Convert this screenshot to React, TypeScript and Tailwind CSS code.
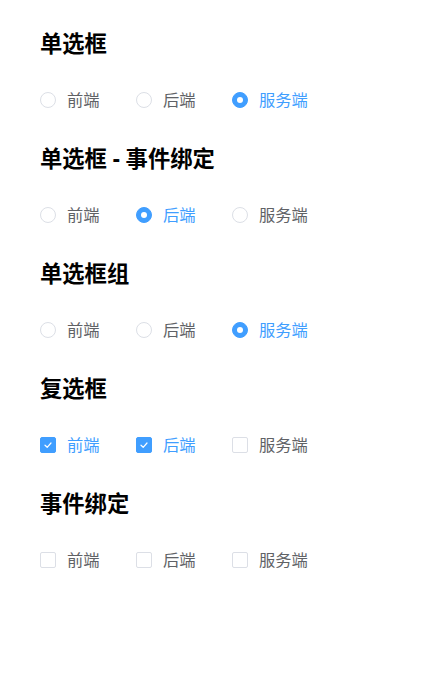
import { useState } from "react";

const OPTIONS = ["前端", "后端", "服务端"];

function Radio({ label, checked, onClick }: { label: string; checked: boolean; onClick: () => void }) {
  return (
    <label onClick={onClick} className="flex h-6 w-24 cursor-pointer items-center">
      <span
        className={`flex h-4 w-4 shrink-0 items-center justify-center rounded-full border ${
          checked ? "border-[#409eff] bg-[#409eff]" : "border-[#dcdfe6] bg-white"
        }`}
      >
        {checked && <span className="h-[6px] w-[6px] rounded-full bg-white" />}
      </span>
      <span className={`ml-[11px] text-[16.3px] ${checked ? "text-[#409eff]" : "text-[#606266]"}`}>{label}</span>
    </label>
  );
}

function Checkbox({ label, checked, onClick }: { label: string; checked: boolean; onClick: () => void }) {
  return (
    <label onClick={onClick} className="flex h-6 w-24 cursor-pointer items-center">
      <span
        className={`flex h-4 w-4 shrink-0 items-center justify-center rounded-[2px] border ${
          checked ? "border-[#409eff] bg-[#409eff]" : "border-[#dcdfe6] bg-white"
        }`}
      >
        {checked && (
          <svg width="10" height="10" viewBox="0 0 10 10" fill="none">
            <path d="M2 5.2 4.2 7.3 8 3" stroke="white" strokeWidth="1.2" strokeLinecap="round" strokeLinejoin="round" />
          </svg>
        )}
      </span>
      <span className={`ml-[11px] text-[16.3px] ${checked ? "text-[#409eff]" : "text-[#606266]"}`}>{label}</span>
    </label>
  );
}

function Section({ title, children }: { title: string; children: React.ReactNode }) {
  return (
    <section className="h-[115px]">
      <h3 className="h-[30px] text-[22.3px] font-bold leading-[30px] text-black">{title}</h3>
      <div className="mt-[29px] flex">{children}</div>
    </section>
  );
}

export default function App() {
  const [r1, setR1] = useState(2);
  const [r2, setR2] = useState(1);
  const [r3, setR3] = useState(2);
  const [c1, setC1] = useState([true, true, false]);
  const [c2, setC2] = useState([false, false, false]);

  const toggle = (arr: boolean[], i: number) => arr.map((v, j) => (j === i ? !v : v));

  return (
    <div
      className="min-h-[677px] bg-white px-10 pt-[29px]"
      style={{ fontFamily: '"Noto Sans", "Noto Sans CJK SC", sans-serif' }}
    >
      <Section title="单选框">
        {OPTIONS.map((o, i) => (
          <Radio key={o} label={o} checked={r1 === i} onClick={() => setR1(i)} />
        ))}
      </Section>
      <Section title="单选框 - 事件绑定">
        {OPTIONS.map((o, i) => (
          <Radio key={o} label={o} checked={r2 === i} onClick={() => setR2(i)} />
        ))}
      </Section>
      <Section title="单选框组">
        {OPTIONS.map((o, i) => (
          <Radio key={o} label={o} checked={r3 === i} onClick={() => setR3(i)} />
        ))}
      </Section>
      <Section title="复选框">
        {OPTIONS.map((o, i) => (
          <Checkbox key={o} label={o} checked={c1[i]} onClick={() => setC1(toggle(c1, i))} />
        ))}
      </Section>
      <Section title="事件绑定">
        {OPTIONS.map((o, i) => (
          <Checkbox key={o} label={o} checked={c2[i]} onClick={() => setC2(toggle(c2, i))} />
        ))}
      </Section>
    </div>
  );
}
